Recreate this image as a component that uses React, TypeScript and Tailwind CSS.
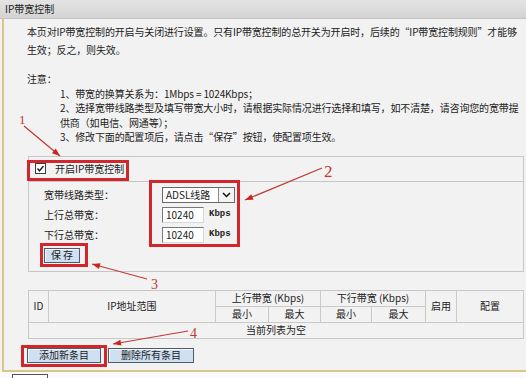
const notes = [
  { n: "1", x: 19, y: 124, size: 13, from: [24, 126], to: [60, 156] },
  { n: "2", x: 324, y: 177, size: 17, from: [322, 168], to: [245, 200] },
  { n: "3", x: 151, y: 289, size: 14, from: [147, 279], to: [92, 264] },
  { n: "4", x: 190, y: 338, size: 14, from: [188, 331], to: [113, 344] },
];

const boxes = [
  { x: 28.5, y: 161.5, w: 99, h: 18 },
  { x: 150.5, y: 181.5, w: 88, h: 64 },
  { x: 41.5, y: 244.5, w: 45, h: 21 },
  { x: 22.5, y: 346.5, w: 83, h: 19 },
];

function head(from: number[], to: number[]) {
  const dx = to[0] - from[0];
  const dy = to[1] - from[1];
  const len = Math.hypot(dx, dy);
  const ux = dx / len;
  const uy = dy / len;
  const bx = to[0] - ux * 8;
  const by = to[1] - uy * 8;
  const p1 = [bx - uy * 3, by + ux * 3];
  const p2 = [bx + uy * 3, by - ux * 3];
  return `${to[0]},${to[1]} ${p1[0]},${p1[1]} ${p2[0]},${p2[1]}`;
}

function Notes() {
  return (
    <svg className="absolute inset-0 pointer-events-none" width={526} height={378}>
      {boxes.map((b, i) => (
        <rect key={i} x={b.x} y={b.y} width={b.w} height={b.h} fill="none" stroke="#d0262c" strokeWidth={3} />
      ))}
      {notes.map((a) => (
        <g key={a.n}>
          <line x1={a.from[0]} y1={a.from[1]} x2={a.to[0]} y2={a.to[1]} stroke="#c23a34" strokeWidth={1.2} />
          <polygon points={head(a.from, a.to)} fill="#c8261f" />
          <text x={a.x} y={a.y} fontSize={a.size} fill="#c0392f" fontFamily="Liberation Serif, serif">
            {a.n}
          </text>
        </g>
      ))}
    </svg>
  );
}

function Btn({ label, w }: { label: string; w: string }) {
  return (
    <div
      className={`${w} h-[15px] border border-[#4f5b66] bg-[#cfe0f2] shadow-[inset_1px_1px_0_#f4f9ff] flex items-center justify-center text-[10px] leading-none text-[#222]`}
    >
      {label}
    </div>
  );
}

export default function App() {
  const cell = "border border-[#c9c9c9] text-center align-middle p-0 h-[16px] leading-none";
  return (
    <div className="relative w-[526px] h-[378px] overflow-hidden bg-[#f2f2f2] text-[#222] text-[10px] font-['Noto_Sans_CJK_SC','Noto_Sans',sans-serif]">
      <div className="h-[19px] pl-[5px] leading-[18px] bg-gradient-to-b from-[#e4e4e4] to-[#d3d3d3] border-b border-[#c2c2c2]">
        IP带宽控制
      </div>

      <div className="ml-[2px] h-[353px] border-l-2 border-b-2 border-[#d9c48a]">
        <div className="pt-[4px] pl-[23px] whitespace-nowrap tracking-[-0.15px]">
          <p className="leading-[18px]">本页对IP带宽控制的开启与关闭进行设置。只有IP带宽控制的总开关为开启时，后续的“IP带宽控制规则”才能够</p>
          <p className="leading-[18px]">生效；反之，则失效。</p>
          <p className="mt-[13px] leading-[14.5px]">注意：</p>
          <div className="pl-[33px] leading-[14.5px]">
            <p>1、带宽的换算关系为：1Mbps = 1024Kbps；</p>
            <p>2、选择宽带线路类型及填写带宽大小时，请根据实际情况进行选择和填写，如不清楚，请咨询您的宽带提</p>
            <p>供商（如电信、网通等）；</p>
            <p>3、修改下面的配置项后，请点击“保存”按钮，使配置项生效。</p>
          </div>
        </div>

        <div className="ml-[24px] mt-[11px] w-[496px] h-[116px] border border-[#c6c6c6]">
          <div className="h-[25px] border-b border-[#c6c6c6] flex items-center pl-[6px]">
            <div className="w-[11px] h-[11px] border border-[#3c3c3c] bg-white flex items-center justify-center">
              <svg width="9" height="9" viewBox="0 0 9 9">
                <path d="M1.5 4.5 L3.5 6.8 L7.5 2" fill="none" stroke="#222" strokeWidth="1.4" />
              </svg>
            </div>
            <span className="ml-[9px]">开启IP带宽控制</span>
          </div>

          <div className="pl-[15px] pt-[3px]">
            <div className="h-[20px] flex items-center">
              <span className="w-[118px]">宽带线路类型：</span>
              <div className="w-[73px] h-[16px] border border-[#6a6a6a] bg-white flex items-center">
                <span className="flex-1 pl-[3px] leading-none">ADSL线路</span>
                <div className="w-[16px] h-[14px] border-l border-[#8a8a8a] bg-[#f4f4f4] flex items-center justify-center">
                  <svg width="9" height="6" viewBox="0 0 9 6">
                    <path d="M1 1 L4.5 4.5 L8 1" fill="none" stroke="#111" strokeWidth="1.5" />
                  </svg>
                </div>
              </div>
            </div>
            {["上行总带宽：", "下行总带宽："].map((l) => (
              <div key={l} className="h-[20px] flex items-center">
                <span className="w-[118px]">{l}</span>
                <div className="w-[42px] h-[16px] border border-[#777] border-b-[#d8d8d8] border-r-[#d8d8d8] bg-white pl-[3px] flex items-center leading-none">
                  10240
                </div>
                <span className="ml-[5px] text-[9px] font-bold font-['Liberation_Mono',monospace]">Kbps</span>
              </div>
            ))}
            <div className="mt-[3px] flex">
              <Btn label="保 存" w="w-[36px]" />
            </div>
          </div>
        </div>

        <table className="ml-[24px] mt-[18px] w-[496px] border-collapse table-fixed border border-[#c2c2c2]">
          <colgroup>
            <col className="w-[20px]" />
            <col className="w-[167px]" />
            <col className="w-[53px]" />
            <col className="w-[52px]" />
            <col className="w-[51px]" />
            <col className="w-[54px]" />
            <col className="w-[31px]" />
            <col className="w-[67px]" />
          </colgroup>
          <tbody>
            <tr>
              <td rowSpan={2} className={cell}>ID</td>
              <td rowSpan={2} className={cell}>IP地址范围</td>
              <td colSpan={2} className={cell}>上行带宽 (Kbps)</td>
              <td colSpan={2} className={cell}>下行带宽 (Kbps)</td>
              <td rowSpan={2} className={cell}>启用</td>
              <td rowSpan={2} className={cell}>配置</td>
            </tr>
            <tr>
              <td className={cell}>最小</td>
              <td className={cell}>最大</td>
              <td className={cell}>最小</td>
              <td className={cell}>最大</td>
            </tr>
            <tr>
              <td colSpan={8} className={cell}>当前列表为空</td>
            </tr>
          </tbody>
        </table>

        <div className="ml-[23px] mt-[9px] flex gap-[7px]">
          <Btn label="添加新条目" w="w-[74px]" />
          <Btn label="删除所有条目" w="w-[86px]" />
        </div>
      </div>

      <div className="bg-[#fafafa] h-[10px] pl-[12px] pt-[2px]">
        <div className="w-[36px] h-[8px] border border-[#555] border-b-0 bg-white" />
      </div>

      <Notes />
    </div>
  );
}
